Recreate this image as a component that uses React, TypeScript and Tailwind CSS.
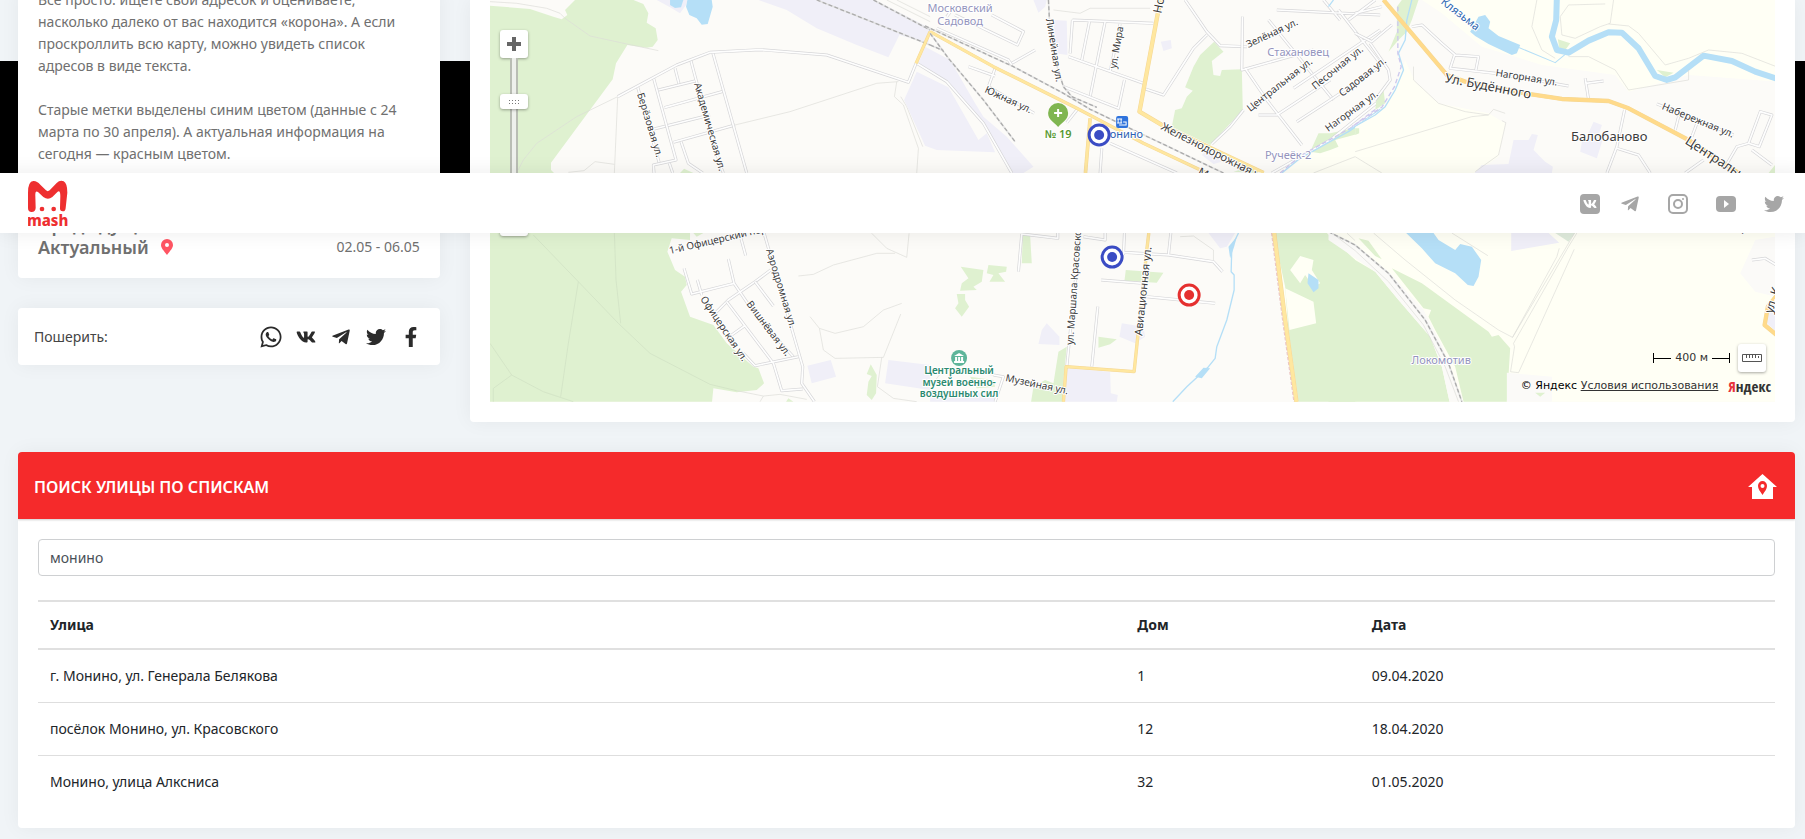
import React, { useState } from 'react';
import { FaFacebookF, FaTelegramPlane, FaTwitter, FaVk, FaWhatsapp } from 'react-icons/fa';

interface Street {
  name: string;
  house: string;
  date: string;
}

interface MapLabel {
  text: string;
  x: number;
  y: number;
  angle?: number;
  size?: number;
  color?: string;
  anchor?: 'start' | 'middle' | 'end';
  bold?: boolean;
}

const streets: Street[] = [
  { name: 'г. Монино, ул. Генерала Белякова', house: '1', date: '09.04.2020' },
  { name: 'посёлок Монино, ул. Красовского', house: '12', date: '18.04.2020' },
  { name: 'Монино, улица Алксниса', house: '32', date: '01.05.2020' },
];

const LILAC = '#9494bd';
const TEAL = '#2c8a70';

const labels: MapLabel[] = [
  { text: 'Московский', x: 960, y: 12, color: LILAC, anchor: 'middle' },
  { text: 'Садовод', x: 960, y: 25, color: LILAC, anchor: 'middle' },
  { text: 'Стахановец', x: 1298, y: 56, color: LILAC, anchor: 'middle' },
  { text: 'Ручеёк-2', x: 1288, y: 159, color: LILAC, anchor: 'middle' },
  { text: 'Локомотив', x: 1441, y: 364, color: LILAC, anchor: 'middle' },
  { text: 'Балобаново', x: 1609, y: 141, size: 13, anchor: 'middle' },
  { text: 'Берёзовая ул.', x: 637, y: 94, angle: 73, size: 10 },
  { text: 'Академическая ул.', x: 694, y: 84, angle: 74, size: 10 },
  { text: 'Линейная ул.', x: 1046, y: 19, angle: 81, size: 10 },
  { text: 'ул. Мира', x: 1116, y: 69, angle: -80, size: 10 },
  { text: 'Южная ул.', x: 984, y: 92, angle: 25, size: 10 },
  { text: 'Но', x: 1161, y: 14, angle: -78, size: 12 },
  { text: 'Зелёная ул.', x: 1248, y: 48, angle: -25, size: 10 },
  { text: 'Центральная ул.', x: 1250, y: 112, angle: -38, size: 10 },
  { text: 'Песочная ул.', x: 1315, y: 90, angle: -39, size: 10 },
  { text: 'Садовая ул.', x: 1342, y: 97, angle: -38, size: 10 },
  { text: 'Нагорная ул.', x: 1328, y: 132, angle: -36, size: 10 },
  { text: 'Железнодорожная ул.', x: 1160, y: 129, angle: 27, size: 11 },
  { text: 'Московская ул.', x: 1197, y: 174, angle: 27, size: 11 },
  { text: '№ 19', x: 1058, y: 138, color: '#57982f', size: 11, anchor: 'middle', bold: true },
  { text: 'Монино', x: 1143, y: 138, color: '#2c5fb3', size: 11, anchor: 'end' },
  { text: 'Клязьма', x: 1440, y: 3, angle: 38, color: '#2b66b0', size: 11 },
  { text: 'Ул. Будённого', x: 1444, y: 82, angle: 11, size: 13 },
  { text: 'Нагорная ул.', x: 1495, y: 76, angle: 9, size: 10 },
  { text: 'Набережная ул.', x: 1661, y: 109, angle: 22, size: 10 },
  { text: 'Центральная ул.', x: 1684, y: 143, angle: 33, size: 13 },
  { text: '1-й Офицерский пер.', x: 670, y: 254, angle: -13, size: 10 },
  { text: 'Аэродромная ул.', x: 766, y: 250, angle: 73, size: 10 },
  { text: 'Вишнёвая ул.', x: 746, y: 304, angle: 53, size: 10 },
  { text: 'Офицерская ул.', x: 700, y: 299, angle: 56, size: 10 },
  { text: 'ул. Маршала Красовского', x: 1073, y: 345, angle: -86, size: 10 },
  { text: 'Авиационная ул.', x: 1142, y: 336, angle: -84, size: 11 },
  { text: 'Музейная ул.', x: 1005, y: 381, angle: 12, size: 10 },
  { text: 'ул.', x: 1733, y: 226, angle: 40, size: 10 },
  { text: 'ул. К', x: 1772, y: 314, angle: -72, size: 12 },
  { text: 'Центральный', x: 959, y: 374, color: TEAL, size: 10, anchor: 'middle', bold: true },
  { text: 'музей военно-', x: 959, y: 386, color: TEAL, size: 10, anchor: 'middle', bold: true },
  { text: 'воздушных сил', x: 959, y: 397, color: TEAL, size: 10, anchor: 'middle', bold: true },
];

// Tile geometry is drawn at triple scale
const Tile: React.FC<{ x: number; y: number; children: React.ReactNode }> = ({ x, y, children }) => (
  <g transform={`translate(${x} ${y}) scale(${1 / 3})`} fill="none">
    {children}
  </g>
);

const Park = ({ d }: { d: string }) => <path d={d} fill="#dff1d0" />;
const Field = ({ d }: { d: string }) => <path d={d} fill="#fffff5" />;
const Town = ({ d }: { d: string }) => <path d={d} fill="#fbfaf8" />;
const Zone = ({ d }: { d: string }) => <path d={d} fill="#f0eff8" />;
const Water = ({ d }: { d: string }) => <path d={d} fill="#b5dff7" />;
const River = ({ d, w = 4 }: { d: string; w?: number }) => (
  <path d={d} stroke="#b5dff7" strokeWidth={w} strokeLinejoin="round" />
);
const Trail = ({ d }: { d: string }) => <path d={d} stroke="#dcdcd8" strokeWidth={2} />;
const Road = ({ d }: { d: string }) => (
  <>
    <path d={d} stroke="#d6d6d8" strokeWidth={9} strokeLinejoin="round" />
    <path d={d} stroke="#fefefe" strokeWidth={5} strokeLinejoin="round" />
  </>
);
const Highway = ({ d, w = 9, color = '#ffe79f' }: { d: string; w?: number; color?: string }) => (
  <>
    <path d={d} stroke="#f4d796" strokeWidth={w + 1} strokeLinejoin="round" />
    <path d={d} stroke={color} strokeWidth={w - 2} strokeLinejoin="round" />
  </>
);
const Rail = ({ d }: { d: string }) => (
  <>
    <path d={d} stroke="#e4e4e4" strokeWidth={5} />
    <path d={d} stroke="#acacac" strokeWidth={4} strokeDasharray="12 7" />
  </>
);

const Marker = ({ x, y, color }: { x: number; y: number; color: string }) => (
  <g>
    <circle cx={x} cy={y} r={10} fill="#fff" stroke={color} strokeWidth={3} />
    <circle cx={x} cy={y} r={5} fill={color} />
  </g>
);

const CityMap: React.FC = () => (
  <svg
    viewBox="490 0 1285 402"
    preserveAspectRatio="xMidYMid slice"
    className="block h-[402px] w-full bg-[#fcfbf8]"
    role="img"
    aria-label="Карта Монино"
  >
    <Tile x={480} y={0}>
      <Park d="M30 17L150 27L220 50L245 58L262 45L255 30L285 0H460L490 12L505 40L500 68L527 85L533 120L518 140L500 143L442 135L408 190L398 238L213 488V700H30Z" />
      <Park d="M600 519L612 506L640 519Z" />
      <Zone d="M530 0H622L618 15L600 40L570 22Z" />
      <Zone d="M835 0H1185L1350 85L1345 130L1258 105L1225 172L1130 135L1010 85L920 30Z" />
      <Water d="M570 0H610L603 22L585 24L570 15Z" />
      <Water d="M622 0H695L698 20L683 72L665 74L650 55L628 45L618 20Z" />
      <Trail d="M30 5L110 10L200 25L240 40L255 55L330 108L440 132L535 152" />
      <Trail d="M765 375L930 335L1190 250L1255 245" />
      <Trail d="M413 290L403 519M413 290L290 350L170 430L130 480L110 519M403 493L345 485L312 512L265 517" />
      <Trail d="M1250 245L1243 290L1270 315L1315 445L1310 519M1262 290L1280 320L1328 440" />
      <Road d="M472 258L538 490M632 180L648 240L722 500L730 519M585 205L597 252M568 490L578 519" />
      <Road d="M535 270L645 243M553 323L733 273M510 390L690 345M580 427L765 375" />
      <Road d="M603 425L625 490L668 519M520 232L588 480L520 495L522 519M698 157L800 519" />
      <Road d="M413 290L590 195L690 157L840 149L1040 165L1285 247L1308 190" />
      <Rail d="M1010 0L1350 135" />
      <Rail d="M1180 0L1350 90" />
      <Trail d="M1220 0L1350 65M1250 0L1350 50" />
    </Tile>

    <Tile x={930} y={0}>
      <Zone d="M-15 140L60 180L135 310L160 350L230 410L310 500L280 519H240L160 370L50 245L-35 190Z" />
      <Zone d="M-40 215L55 262L145 420L170 400L195 457L20 450L-15 437L-78 300Z" />
      <Zone d="M370 60L410 62L412 165L375 160Z" />
      <Zone d="M692 125L722 120L725 145L700 153ZM310 0H350L345 20L325 38ZM815 465L830 450L875 485L850 492Z" />
      <Park d="M852 125L880 155L845 183L850 225L870 228L875 210L935 208L938 330L840 435L725 380L735 330L755 325L770 290L788 272L765 262L790 200L810 165Z" />
      <Field d="M1060 519L1140 455L1275 375V519Z" />
      <Park d="M1140 455L1165 400H1200L1290 380V400L1215 420L1225 440L1200 450L1170 460ZM910 515L960 500L985 519Z" />
      <Trail d="M370 30L450 40L480 25H660M1150 519L1275 470" />
      <Road d="M427 60L670 70M427 60L420 160M478 65L455 180M525 65L480 290M570 72L540 215M415 170L640 250" />
      <Road d="M640 265L700 285L790 145L830 105M583 240L565 325L400 260M765 0L830 95L870 137L950 140" />
      <Road d="M937 50L935 210L1150 150M945 205L1010 300L1115 435M1015 60L1210 300M985 345L1040 345L1200 240" />
      <Road d="M960 330L1110 210M1100 365L1200 300L1350 200M1090 265L1350 90M1040 30L1350 45M1225 30L1350 190M1180 0L1230 60" />
      <Road d="M940 330L900 380L845 432M1025 519L1200 420M1200 420L1350 300" />
      <Road d="M50 50L65 30M185 45L280 95L262 135L75 45M115 200L195 228M195 205L175 260L312 340M245 190L315 150M410 368L440 330" />
      <Road d="M-40 190L50 245L160 370L245 519M20 85L235 180L245 195M515 445L510 519M540 430L740 519" />
      <Highway d="M0 95L-42 190M0 95L190 200L440 325L640 430L830 519" />
      <Highway d="M480 355L466 519" w={10} />
      <Highway d="M694 -20L683 40L628 335L700 378L1000 519" w={12} />
      <Rail d="M-15 78L250 200L400 280L480 328L880 519" />
      <Rail d="M355 0L358 60L375 180L400 260L425 290L500 322" />
      <Rail d="M0 135L40 152M0 100L55 175L160 300L255 425" />
      <River d="M1055 519L1110 475L1190 430L1260 392L1350 328M1195 20L1210 0" />
      <path d="M1050 519L1110 468L1190 424L1260 385L1340 325" stroke="#cdc8ee" strokeWidth={4} strokeDasharray="14 8" />
    </Tile>

    <Tile x={1355} y={0}>
      <Field d="M200 0H1263V245L1000 225L820 275L780 225L560 195L380 140L260 40Z" />
      <Field d="M150 180L180 245L250 310L400 340L450 370L430 470L360 519H0V380L90 320L120 270Z" />
      <Park d="M100 155L125 95V20L140 0H190L170 60L155 95L130 120ZM60 330L65 290L85 270L90 310ZM0 385L12 385V400L0 405ZM1240 519L1263 490V519Z" />
      <Park d="M608 118L645 130L630 150L612 145ZM905 210L955 218L930 232Z" />
      <Zone d="M475 420H520L530 402L548 405L535 450L570 485L593 500L590 519H358L380 495L460 492Z" />
      <Zone d="M680 425L695 410L715 365L740 375L732 400L745 410L725 475L675 455Z" />
      <Water d="M345 95L370 50L390 45L405 65L400 85L430 108L495 135L485 160L470 165L400 132L360 108Z" />
      <River d="M480 138L600 188L640 155" w={3} />
      <River d="M605 -10L603 60L590 110L605 150L640 158L700 122L760 97L800 98L850 145L900 228L935 240L960 232L1045 167L1130 183L1200 215L1270 238" w={18} />
      <River d="M170 0L155 60L150 120L130 160L145 210L120 270L90 320L60 345L-20 390" />
      <path d="M128 20L128 160L138 200L118 260L80 322L-10 380" stroke="#cdc8ee" strokeWidth={4} strokeDasharray="14 8" />
      <Trail d="M545 0L530 80L560 150L600 175M615 50L640 15L750 12M775 0L765 70L735 80L660 115L620 105L615 50" />
      <Trail d="M760 72L820 78L850 100L930 195L1000 175L1060 150L1160 160L1263 200M640 170H700L780 210L820 270L1000 240V210" />
      <Trail d="M0 455L350 350L400 345M175 200V240L250 310L330 335L400 345L415 328L450 340M440 362L452 368L430 465L360 515M0 470L80 519" />
      <Road d="M170 80L200 75L260 130L300 165L370 170L362 210M298 165L285 205L420 220L640 258M690 235L700 298M692 250L745 243" />
      <Road d="M808 330L785 440L755 519M785 445L850 465L885 519M905 312L1135 405M970 350L960 390M1025 370L1010 410M1045 480L990 519" />
      <Road d="M1180 430L1215 335L1250 345L1212 440ZM1180 430L1145 440L1110 500M1190 450L1250 495" />
      <Road d="M0 40L80 20M0 100L50 125L110 75M45 130L100 210L105 240L60 300M-20 60L60 0" />
      <Highway d="M85 0L275 225L330 245L520 282L620 297L760 303L820 325L1000 420L1150 519" w={12} color="#ffda8a" />
    </Tile>

    <Tile x={480} y={220}>
      <Park d="M30 -150H213L400 39H630V60L575 55L562 95L585 150L615 170L620 195L603 215L630 290L700 315L740 370L820 440L835 445L852 490L830 510L770 517L700 505L696 545H30Z" />
      <Park d="M640 39H670L650 50ZM1172 433L1190 465L1188 520L1175 540L1160 525L1165 485L1175 468L1160 462ZM918 545L925 535L940 545Z" />
      <Zone d="M982 437L1052 420L1068 470L995 490ZM1225 420L1350 435V510L1215 490Z" />
      <path
        d="M160 45L295 185L415 310L510 400L690 493L770 512M403 39L408 180L422 310M295 185L265 370L242 530M30 370L95 465L190 515L280 545M95 465L40 505V545"
        stroke="#cfe0c3"
        strokeWidth={2}
      />
      <Trail d="M770 512L850 528L900 523L980 538M850 528L840 545M955 168L1000 163L1060 135L1190 100H1245M1175 40L1220 85L1280 112L1287 40" />
      <Trail d="M990 290L1018 325L1065 340L1150 320L1210 270L1265 250M1018 325L1030 390L1065 415L1210 412L1262 282M1205 412L1192 500L1240 535L1310 545" />
      <Road d="M780 45L797 107M745 117L762 190L635 222L612 145M652 180L665 225M762 190L830 290L940 410M872 150L825 185L745 240L705 280" />
      <Road d="M825 185L880 258M740 245L880 430L905 512L968 507M793 318L745 352M790 400L825 437L955 410M852 39L968 440L965 490L1003 545" />
    </Tile>

    <Tile x={930} y={220}>
      <Park d="M278 45H300L305 130H275ZM92 140L160 150L155 185L130 200L140 210L90 212L95 190L115 175ZM175 135L230 140L228 155L205 160L225 185H178L190 165L170 160ZM80 222H105V240L117 260L95 290L75 265L85 250Z" />
      <Park d="M587 150L700 158L680 188L583 182ZM505 350L560 358L540 373L505 383ZM385 395L410 380L400 480V545H303L310 500L345 480L370 490ZM120 470L190 480L195 500L140 505Z" />
      <Field d="M1030 39H1400V300H1060Z" />
      <Park d="M1030 39H1190L1275 120L1280 150V545H1105L1075 330L1065 200Z" />
      <Field d="M1065 205L1150 245L1158 310L1078 330ZM1080 150L1110 108L1150 120L1145 150L1170 190L1150 200L1125 165L1110 190Z" />
      <Zone d="M410 445L540 455L542 520L563 525L560 545H405ZM575 310L640 320L645 350L615 370L568 350ZM350 310L388 350V375L325 372L335 330ZM835 39H915L890 80L870 85ZM0 510L190 520L200 545H0Z" />
      <Water d="M1135 160L1165 180V205L1150 217L1132 190ZM895 80L920 50L912 80L900 115ZM795 470L820 443L840 445L815 475Z" />
      <Trail d="M750 50L790 48L850 90V125M40 450L0 500M40 450L190 465" />
      <Road d="M275 42L265 155M275 42L383 55V39M460 50L525 60V39M583 39L580 105M580 97L715 105L850 125L877 155M722 39L715 105" />
      <Road d="M513 180L640 190M650 230L855 250M503 260L485 440M450 39L410 440M190 465L220 470L195 545" />
      <Highway d="M656 39L650 90L612 455L408 440L400 545" />
      <Highway d="M1032 39L1065 300L1099 545" w={12} />
      <path d="M1024 39L1057 300L1091 545" stroke="#e2a7a7" strokeWidth={2} strokeDasharray="10 5" />
      <River d="M925 39L905 80L903 155L912 165V210L890 300L860 380L855 415L835 440L770 500L728 545" />
    </Tile>

    <Tile x={1355} y={220}>
      <Field d="M0 39H1263V545H0Z" />
      <Park d="M-80 60L0 120L60 155L130 240L225 350L260 440L283 545H-80Z" />
      <Park d="M10 55L40 62L80 118L60 108ZM110 145L200 190L400 335L410 350L430 345L465 385L455 545H325L300 440L240 330L220 290L228 270L205 265Z" />
      <Town d="M-80 39L0 75L100 155L205 270L262 380L325 545H283L260 440L225 350L130 240L60 155L-80 60Z" />
      <Town d="M455 458L590 470V545H455ZM1263 50L1200 60L1155 160L1200 215L1263 230Z" />
      <Water d="M153 39H235L250 60L300 90L315 72L350 80L378 120L370 170L355 198L338 195L300 160L240 130L200 85Z" />
      <Zone d="M468 39H580L612 68L468 93ZM1263 240L1240 265L1235 310L1263 335Z" />
      <path d="M600 39H660L640 65Z" fill="#dfebdc" />
      <Park d="M540 518H570L555 530Z" />
      <Trail d="M55 39L150 120L300 240L430 330L472 352L520 265L605 110L612 85M290 39L398 107" />
      <Trail d="M665 39L640 80L475 370L478 380L466 455L490 458L530 370L657 88M658 39L634 80L472 352" />
      <Trail d="M-70 39L0 92L100 185L205 315L270 440L310 545M-25 39L0 62" />
      <Rail d="M-80 35L0 75L100 160L210 300L280 430L320 545" />
      <Road d="M1190 120L1230 115L1263 135" />
      <Highway d="M1268 222L1238 260L1228 315L1268 348" w={12} color="#ffda8a" />
    </Tile>

    <g fontFamily="'Noto Sans', sans-serif" stroke="#fff" strokeWidth={2} strokeLinejoin="round" paintOrder="stroke">
      {labels.map((label, index) => (
        <text
          key={index}
          transform={`translate(${label.x} ${label.y}) rotate(${label.angle ?? 0})`}
          fontSize={label.size ?? 11}
          fill={label.color ?? '#3c3c3c'}
          textAnchor={label.anchor ?? 'start'}
          fontWeight={label.bold ? 600 : 400}
        >
          {label.text}
        </text>
      ))}
    </g>

    {/* Pharmacy pin */}
    <path d="M1058 127C1054 122 1048 120 1048 113A10 10 0 0 1 1068 113C1068 120 1062 122 1058 127Z" fill="#80b651" />
    <path d="M1058 109V117M1054 113H1062" stroke="#fff" strokeWidth={2} />

    {/* Railway station */}
    <rect x={1116} y={116} width={12} height={12} rx={2} fill="#2f73dc" />
    <path d="M1117 119H1122M1118 119V123M1121 119V123M1117 123H1122M1123 122H1126V125H1119" fill="none" stroke="#fff" strokeWidth={1} />

    {/* Museum */}
    <circle cx={959} cy={358} r={8} fill="#5eb59a" />
    <path d="M954 356L959 353L964 356ZM955 357H957V361H955ZM958 357H960V361H958ZM961 357H963V361H961ZM954 361H964V363H954Z" fill="#fff" />

    <Marker x={1099} y={135} color="#3b4cc4" />
    <Marker x={1112} y={257} color="#3b4cc4" />
    <Marker x={1189} y={295} color="#e5302f" />
  </svg>
);

const ZoomControl: React.FC = () => {
  const [zoom, setZoom] = useState<number>(73);

  return (
    <div className="absolute left-2.5 top-[30px] flex w-7 flex-col items-center">
      <button
        type="button"
        aria-label="Приблизить"
        onClick={() => setZoom(Math.min(100, zoom + 5))}
        className="flex size-7 items-center justify-center rounded-[3px] bg-white shadow-[0_1px_3px_rgba(0,0,0,0.35)]"
      >
        <svg viewBox="0 0 14 14" className="size-3.5" fill="#666">
          <path d="M5 0H9V5H14V9H9V14H5V9H0V5H5Z" />
        </svg>
      </button>
      <input
        type="range"
        aria-label="Масштаб"
        min={0}
        max={100}
        value={zoom}
        onChange={(e) => setZoom(Number(e.target.value))}
        className="m-0 h-[150px] w-7 appearance-none bg-[linear-gradient(to_right,transparent_10px,#b9bdb4_10px,#b9bdb4_12px,#eef0ec_12px,#eef0ec_16px,#b9bdb4_16px,#b9bdb4_18px,transparent_18px)] [direction:rtl] [writing-mode:vertical-lr] [&::-webkit-slider-thumb]:h-[15px] [&::-webkit-slider-thumb]:w-7 [&::-webkit-slider-thumb]:appearance-none [&::-webkit-slider-thumb]:rounded-[3px] [&::-webkit-slider-thumb]:shadow-[0_1px_3px_rgba(0,0,0,0.35)] [&::-webkit-slider-thumb]:[background:repeating-linear-gradient(to_right,#777_0_1px,#fff_1px_3px)_center_6px/10px_1px_no-repeat,repeating-linear-gradient(to_right,#777_0_1px,#fff_1px_3px)_center_9px/10px_1px_no-repeat,#fff]"
      />
      <button
        type="button"
        aria-label="Отдалить"
        onClick={() => setZoom(Math.max(0, zoom - 5))}
        className="flex size-7 items-center justify-center rounded-[3px] bg-white shadow-[0_1px_3px_rgba(0,0,0,0.35)]"
      >
        <span className="h-1 w-3.5 bg-[#666]" />
      </button>
    </div>
  );
};

const MapFooter: React.FC = () => (
  <div className="absolute bottom-0.5 right-1 flex flex-col items-end font-['DejaVu_Sans',sans-serif] text-[11px] text-black">
    <div className="mr-[5px] flex items-center gap-2">
      <div className="flex items-center gap-1">
        <span className="flex h-2.5 w-[18px] items-center border-l border-black">
          <span className="h-px w-full bg-black" />
        </span>
        <span className="text-[#333]">400 м</span>
        <span className="flex h-2.5 w-[18px] items-center border-r border-black">
          <span className="h-px w-full bg-black" />
        </span>
      </div>
      <button
        type="button"
        aria-label="Измерить расстояние"
        className="flex size-7 items-center justify-center rounded-[3px] bg-white shadow-[0_1px_3px_rgba(0,0,0,0.35)]"
      >
        <svg viewBox="0 0 20 8" className="h-2 w-5" fill="none" stroke="#555">
          <path d="M.5 .5H19.5V7.5H.5ZM4.5 1V4M7.5 1V4M10.5 1V4M13.5 1V4M16.5 2V4" />
        </svg>
      </button>
    </div>
    <div className="flex h-7 items-center gap-2.5">
      <p>
        © Яндекс{' '}
        <a href="#terms" className="text-[#333] underline">
          Условия использования
        </a>
      </p>
      <a href="#yandex" className="font-['Open_Sans_Condensed','Noto_Sans',sans-serif] text-[15px] font-light text-[#333]">
        <span className="text-[#e8323c]">Я</span>ндекс
      </a>
    </div>
  </div>
);

const Logo: React.FC = () => (
  <svg viewBox="84 544 120 144" className="h-12 w-10" fill="#ee2f30" role="img" aria-label="mash">
    <path d="M95 640Q84 640 84 628V582Q84 548 100 547Q110 546 121 558L138 575Q143 580 149 575L170 553Q180 543 191 548Q202 554 202 582L197 628Q196 639 188 638Q179 637 180 628L181 592Q181 574 173 579L157 595Q144 606 130 595L114 580Q105 574 106 592L107 628Q106 640 95 640Z" />
    <circle cx={126} cy={631} r={7} />
    <circle cx={161} cy={631} r={7} />
    <text x={143} y={682} textAnchor="middle" fontSize={45} fontWeight={800} fontFamily="'Noto Sans', sans-serif">
      mash
    </text>
  </svg>
);

const NavBar: React.FC = () => (
  <header className="absolute inset-x-0 top-[173px] z-20 flex h-[60px] items-center justify-between bg-white pl-7 pr-[21px] pt-0.5 shadow-[0_0_20px_rgba(0,0,0,0.08)]">
    <a href="#home">
      <Logo />
    </a>
    <nav className="flex items-center gap-7 text-[#a6a6a6]">
      <div className="flex items-center gap-5">
        <a href="#vk" aria-label="ВКонтакте" className="flex size-5 items-center justify-center rounded bg-[#a6a6a6] text-white">
          <FaVk className="size-3.5" />
        </a>
        <a href="#telegram" aria-label="Telegram">
          <FaTelegramPlane className="size-5" />
        </a>
      </div>
      <a href="#instagram" aria-label="Instagram">
        <svg viewBox="0 0 20 20" className="size-5" fill="none" stroke="currentColor" strokeWidth={2}>
          <rect x={1} y={1} width={18} height={18} rx={4} />
          <circle cx={10} cy={10} r={4} />
          <circle cx={15} cy={5} r={1} fill="currentColor" stroke="none" />
        </svg>
      </a>
      <a href="#youtube" aria-label="YouTube">
        <svg viewBox="0 0 20 20" className="size-5">
          <rect y={2} width={20} height={16} rx={4} fill="currentColor" />
          <path d="M8 6L13 10L8 14Z" fill="#fff" />
        </svg>
      </a>
      <a href="#twitter" aria-label="Twitter">
        <FaTwitter className="size-5" />
      </a>
    </nav>
  </header>
);

const InfoColumn: React.FC = () => (
  <div className="flex flex-col gap-[30px]">
    <section className="-mt-[11px] rounded bg-white px-5 pb-5 text-sm leading-[22px] text-[#707070] shadow-[0_0_20px_rgba(0,0,0,0.05)]">
      <p>
        Все просто: ищете свой адресок и оцениваете, насколько далеко от вас находится «корона». А если проскроллить
        всю карту, можно увидеть список адресов в виде текста.
      </p>
      <p className="mt-[22px]">
        Старые метки выделены синим цветом (данные с 24 марта по 30 апреля). А актуальная информация на сегодня —
        красным цветом.
      </p>
      <dl className="mt-[49px]">
        <div className="flex items-center justify-between">
          <dt className="text-lg leading-[22px] font-semibold">Предыдущий</dt>
          <dd>24.03 - 30.04</dd>
        </div>
        <div className="flex items-center justify-between">
          <dt className="flex items-center gap-3 text-lg leading-[22px] font-semibold">
            Актуальный
            <svg viewBox="0 0 12 16" className="h-4 w-3" fill="#ff5563">
              <path fillRule="evenodd" d="M6 16C3 12 0 9 0 6A6 6 0 0 1 12 6C12 9 9 12 6 16ZM6 8A2 2 0 1 0 6 4A2 2 0 0 0 6 8Z" />
            </svg>
          </dt>
          <dd>02.05 - 06.05</dd>
        </div>
      </dl>
    </section>

    <section className="flex h-[57px] items-center justify-between rounded bg-white pl-4 pr-[11px] text-[#2b2b2b] shadow-[0_0_20px_rgba(0,0,0,0.05)]">
      <span className="text-sm text-[#444]">Пошерить:</span>
      <div className="flex items-center">
        <a href="#share-whatsapp" aria-label="WhatsApp" className="flex w-[35px] justify-center">
          <FaWhatsapp className="size-6" />
        </a>
        <a href="#share-vk" aria-label="ВКонтакте" className="flex w-[35px] justify-center">
          <FaVk className="size-5" />
        </a>
        <a href="#share-telegram" aria-label="Telegram" className="flex w-[35px] justify-center">
          <FaTelegramPlane className="size-5" />
        </a>
        <a href="#share-twitter" aria-label="Twitter" className="flex w-[35px] justify-center">
          <FaTwitter className="size-5" />
        </a>
        <a href="#share-facebook" aria-label="Facebook" className="flex w-[35px] justify-center">
          <FaFacebookF className="size-5" />
        </a>
      </div>
    </section>
  </div>
);

const StreetSearch: React.FC = () => {
  const [query, setQuery] = useState<string>('монино');
  const found = streets.filter((street) => street.name.toLowerCase().includes(query.trim().toLowerCase()));

  return (
    <section className="mt-[30px] overflow-hidden rounded bg-white shadow-[0_0_20px_rgba(0,0,0,0.05)]">
      <div className="flex h-[67px] items-center justify-between bg-[#f52a2b] pl-4 pr-[18px] pt-0.5 text-white shadow-[0_1px_2px_rgba(0,0,0,0.2)]">
        <h2 className="text-base font-semibold">
          <label htmlFor="street">ПОИСК УЛИЦЫ ПО СПИСКАМ</label>
        </h2>
        <svg viewBox="0 0 29 25" className="h-[25px] w-[29px]" fill="#fff">
          <path
            fillRule="evenodd"
            d="M14.500 0L29 13H25V25H4V13H0ZM14.500 21C17 17 19 15 19 12A4.500 5 0 0 0 10 12C10 15 12 17 14.500 21Z"
          />
          <circle cx={14.5} cy={12} r={2} />
        </svg>
      </div>
      <div className="p-5">
        <input
          id="street"
          type="text"
          value={query}
          onChange={(e) => setQuery(e.target.value)}
          className="block h-[37px] w-full rounded border border-[#ced0d2] bg-white px-[11px] text-sm text-[#495057] outline-none"
        />
        <table className="mt-6 w-full table-fixed text-left text-sm text-[#212529]">
          <thead>
            <tr className="h-12 border-y-2 border-[#e0e0e0]">
              <th className="w-[62.6%] px-3 font-bold">Улица</th>
              <th className="w-[13.5%] px-3 font-bold">Дом</th>
              <th className="px-3 font-bold">Дата</th>
            </tr>
          </thead>
          <tbody>
            {found.map((street) => (
              <tr key={street.name} className="h-[53px] border-b border-[#dedede] last:border-b-0">
                <td className="px-3">{street.name}</td>
                <td className="px-3">{street.house}</td>
                <td className="px-3">{street.date}</td>
              </tr>
            ))}
          </tbody>
        </table>
      </div>
    </section>
  );
};

const App: React.FC = () => (
  <div className="relative min-h-screen overflow-hidden bg-[#f0f4f7] pb-[11px] pl-[18px] pr-2.5 font-['Noto_Sans',sans-serif]">
    <div className="absolute inset-x-0 top-[61px] h-[172px] bg-black" />
    <NavBar />
    <main className="relative">
      <div className="grid grid-cols-4 items-start gap-[30px]">
        <InfoColumn />
        <section className="col-span-3 rounded-b bg-white px-5 pb-5 shadow-[0_0_20px_rgba(0,0,0,0.05)]">
          <div className="relative">
            <CityMap />
            <ZoomControl />
            <MapFooter />
          </div>
        </section>
      </div>
      <StreetSearch />
    </main>
  </div>
);

export default App;
